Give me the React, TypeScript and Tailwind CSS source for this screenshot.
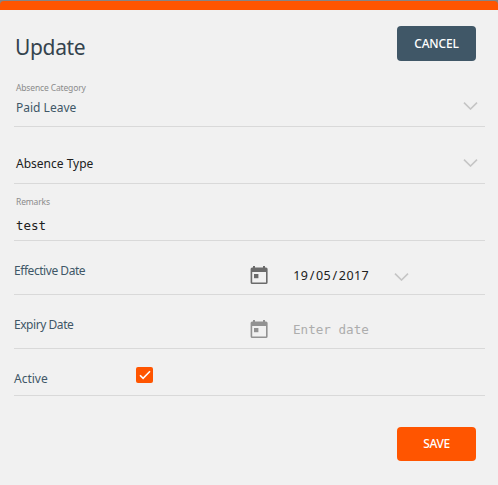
import type { ReactNode } from 'react';

function Chevron({ className = '' }: { className?: string }) {
  return (
    <svg className={`h-2 w-[15px] shrink-0 ${className}`} viewBox="0 0 15 8" fill="none" stroke="#c5c5c5" strokeWidth="1.6">
      <path d="M1 .6 7.5 7 14 .6" />
    </svg>
  );
}

function CalendarIcon({ className = '' }: { className?: string }) {
  return (
    <svg className={`h-[19px] w-[18px] shrink-0 ${className}`} viewBox="0 0 18 19" fill="currentColor">
      <path fillRule="evenodd" d="M3 0h2v1.5h8V0h2v1.5h1a1.6 1.6 0 0 1 1.6 1.6v13.3A1.6 1.6 0 0 1 16 18H2.2a1.6 1.6 0 0 1-1.6-1.6V3.1a1.6 1.6 0 0 1 1.6-1.6H3V0ZM2.2 6v10.4H16V6H2.2Z" />
      <path d="M4 8h4.4v4.2H4z" />
    </svg>
  );
}

/* Fixed-pitch text: every character sits in a cell of equal width. */
function Mono({ text }: { text: string }) {
  return (
    <span className="inline-flex whitespace-pre">
      {[...text].map((c, i) => (
        <span key={i} className="flex w-[7.6px] justify-center">{c}</span>
      ))}
    </span>
  );
}

function Row({ className, children }: { className: string; children: ReactNode }) {
  return <div className={`border-b border-[#d9d9d9] ${className}`}>{children}</div>;
}

export default function App() {
  return (
    <main className="h-[485px] w-[498px] overflow-hidden bg-[#858585] pt-px font-['Noto_Sans',sans-serif] text-[12px] leading-4 text-[#405767]">
      <div className="h-[484px] overflow-hidden rounded-t-[4px] border-t-[9px] border-[#ff5500] bg-[#f1f1f1] pr-[13px] pl-[14px]">
        <header className="flex h-[67px] items-start justify-between pt-4 pr-[9px]">
          <h1 className="mt-[6px] ml-px text-[21px] leading-[30px] tracking-[-0.35px] text-[#34434d]">Update</h1>
          <button className="h-[35px] w-[79px] rounded-[4px] bg-[#405767] text-[12px] font-medium tracking-[-0.15px] text-white">CANCEL</button>
        </header>
        <Row className="flex h-[50px] items-start justify-between pr-[7px] pl-[2px]">
          <div>
            <div className="mt-[5px] text-[8.5px] leading-3 tracking-[-0.15px] text-[#8b8b8b]">Absence Category</div>
            <div className="mt-[6px]">Paid Leave</div>
          </div>
          <Chevron className="mt-[25px]" />
        </Row>
        <Row className="flex h-[57px] items-start justify-between pr-[7px] pl-[2px] text-[#202020]">
          <span className="mt-[29px]">Absence Type</span>
          <Chevron className="mt-[32px]" />
        </Row>
        <Row className="h-[57px] pt-3 pl-[2px]">
          <div className="text-[8.5px] leading-3 tracking-[-0.15px] text-[#8b8b8b]">Remarks</div>
          <div className="mt-[10px] font-['DejaVu_Sans_Mono',monospace] text-[12.5px] text-[#202020]">test</div>
        </Row>
        <Row className="flex h-[54px] items-start">
          <span className="mt-[22px] w-[236px] tracking-[-0.45px]">Effective Date</span>
          <CalendarIcon className="mt-[25px] text-[#6b6b6b]" />
          <span className="mt-[27px] ml-[25px] text-[12.5px] text-[#202020]"><Mono text="19/05/2017" /></span>
          <Chevron className="mt-[32px] ml-[25px]" />
        </Row>
        <Row className="flex h-[54px] items-start">
          <span className="mt-[22px] w-[236px] tracking-[-0.45px]">Expiry Date</span>
          <CalendarIcon className="mt-[25px] text-[#929292]" />
          <span className="mt-[27px] ml-[25px] font-['DejaVu_Sans_Mono',monospace] text-[12.6px] text-[#adadad]">Enter date</span>
        </Row>
        <Row className="flex h-[47px] items-start">
          <span className="mt-[22px] w-[122px]">Active</span>
          <span className="mt-[18px] flex h-4 w-[17px] items-center justify-center rounded-[2px] bg-[#ff5500]">
            <svg className="h-[10px] w-[12px]" viewBox="0 0 12 10" fill="none" stroke="#fff" strokeWidth="1.6">
              <path d="m1 5.2 3.1 3.2L11 1.3" />
            </svg>
          </span>
        </Row>
        <footer className="flex justify-end pt-[31px] pr-[9px]">
          <button className="h-[34px] w-[79px] rounded-[4px] bg-[#ff5500] text-[12px] font-medium tracking-[-0.35px] text-white">SAVE</button>
        </footer>
      </div>
    </main>
  );
}
